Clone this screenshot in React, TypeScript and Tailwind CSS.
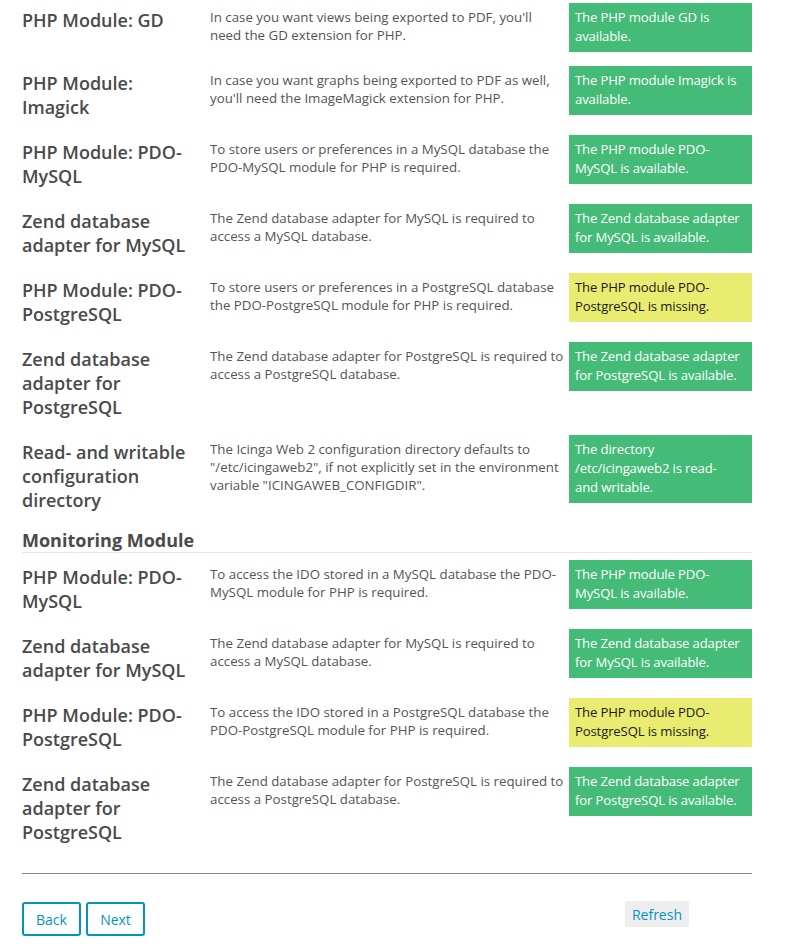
import React from 'react';

type Req = {
  title: string;
  description: string;
  message: string;
  ok: boolean;
};

const CORE: Req[] = [
  {
    title: 'PHP Module: GD',
    description: "In case you want views being exported to PDF, you'll need the GD extension for PHP.",
    message: 'The PHP module GD is available.',
    ok: true,
  },
  {
    title: 'PHP Module: Imagick',
    description: "In case you want graphs being exported to PDF as well, you'll need the ImageMagick extension for PHP.",
    message: 'The PHP module Imagick is available.',
    ok: true,
  },
  {
    title: 'PHP Module: PDO-MySQL',
    description: 'To store users or preferences in a MySQL database the PDO-MySQL module for PHP is required.',
    message: 'The PHP module PDO-MySQL is available.',
    ok: true,
  },
  {
    title: 'Zend database adapter for MySQL',
    description: 'The Zend database adapter for MySQL is required to access a MySQL database.',
    message: 'The Zend database adapter for MySQL is available.',
    ok: true,
  },
  {
    title: 'PHP Module: PDO-PostgreSQL',
    description: 'To store users or preferences in a PostgreSQL database the PDO-PostgreSQL module for PHP is required.',
    message: 'The PHP module PDO-PostgreSQL is missing.',
    ok: false,
  },
  {
    title: 'Zend database adapter for PostgreSQL',
    description: 'The Zend database adapter for PostgreSQL is required to access a PostgreSQL database.',
    message: 'The Zend database adapter for PostgreSQL is available.',
    ok: true,
  },
  {
    title: 'Read- and writable configuration directory',
    description:
      'The Icinga Web 2 configuration directory defaults to "/etc/icingaweb2", if not explicitly set in the environment variable "ICINGAWEB_CONFIGDIR".',
    message: 'The directory /etc/icingaweb2 is read- and writable.',
    ok: true,
  },
];

const MONITORING: Req[] = [
  {
    title: 'PHP Module: PDO-MySQL',
    description: 'To access the IDO stored in a MySQL database the PDO-MySQL module for PHP is required.',
    message: 'The PHP module PDO-MySQL is available.',
    ok: true,
  },
  {
    title: 'Zend database adapter for MySQL',
    description: 'The Zend database adapter for MySQL is required to access a MySQL database.',
    message: 'The Zend database adapter for MySQL is available.',
    ok: true,
  },
  {
    title: 'PHP Module: PDO-PostgreSQL',
    description: 'To access the IDO stored in a PostgreSQL database the PDO-PostgreSQL module for PHP is required.',
    message: 'The PHP module PDO-PostgreSQL is missing.',
    ok: false,
  },
  {
    title: 'Zend database adapter for PostgreSQL',
    description: 'The Zend database adapter for PostgreSQL is required to access a PostgreSQL database.',
    message: 'The Zend database adapter for PostgreSQL is available.',
    ok: true,
  },
];

const Row: React.FC<{ req: Req }> = ({ req }) => (
  <div className="grid grid-cols-[188px_359px_183px] items-start">
    <h2 className="pt-[12px] pb-[9px] pr-[14px] text-[18px] leading-[24px] font-semibold text-[#4a4a4a]">
      {req.title}
    </h2>
    <p className="pt-[12px] pr-[5px] text-[13.3px] leading-[18px] text-[#555555]">{req.description}</p>
    <div
      className={
        req.ok
          ? 'my-[7px] pl-[6px] pr-[10px] pt-[5px] pb-[6px] text-[13.15px] tracking-[-0.15px] leading-[19px] bg-[#44bb77] text-white'
          : 'my-[7px] pl-[6px] pr-[10px] pt-[5px] pb-[6px] text-[13.15px] tracking-[-0.15px] leading-[19px] bg-[#e8ec70] text-[#1a1a1a]'
      }
    >
      {req.message}
    </div>
  </div>
);

export default function App() {
  return (
    <div className="min-h-screen bg-white font-['Open_Sans',sans-serif]">
      <div className="w-[730px] ml-[22px] mt-[-4px]">
        {CORE.map((req, i) => (
          <Row key={'c' + i} req={req} />
        ))}

        <h2 className="mt-[7px] border-b border-[#e6e6e6] text-[18px] leading-[24px] font-bold text-[#4a4a4a]">
          Monitoring Module
        </h2>
        {MONITORING.map((req, i) => (
          <Row key={'m' + i} req={req} />
        ))}

        <div className="mt-[20px] border-t border-[#8a8a8a]" />

        <div className="mt-[28px] flex items-start justify-between pr-[63px]">
          <div className="flex gap-[5px]">
            <button className="w-[59px] h-[34px] rounded-[3px] border-2 border-[#0095bf] text-[14px] text-[#0095bf]">
              Back
            </button>
            <button className="w-[59px] h-[34px] rounded-[3px] border-2 border-[#0095bf] text-[14px] text-[#0095bf]">
              Next
            </button>
          </div>
          <button className="mt-[-1px] h-[26px] px-[7px] rounded-[2px] bg-[#eeeeee] text-[14px] text-[#0095bf]">
            Refresh
          </button>
        </div>
      </div>
    </div>
  );
}
